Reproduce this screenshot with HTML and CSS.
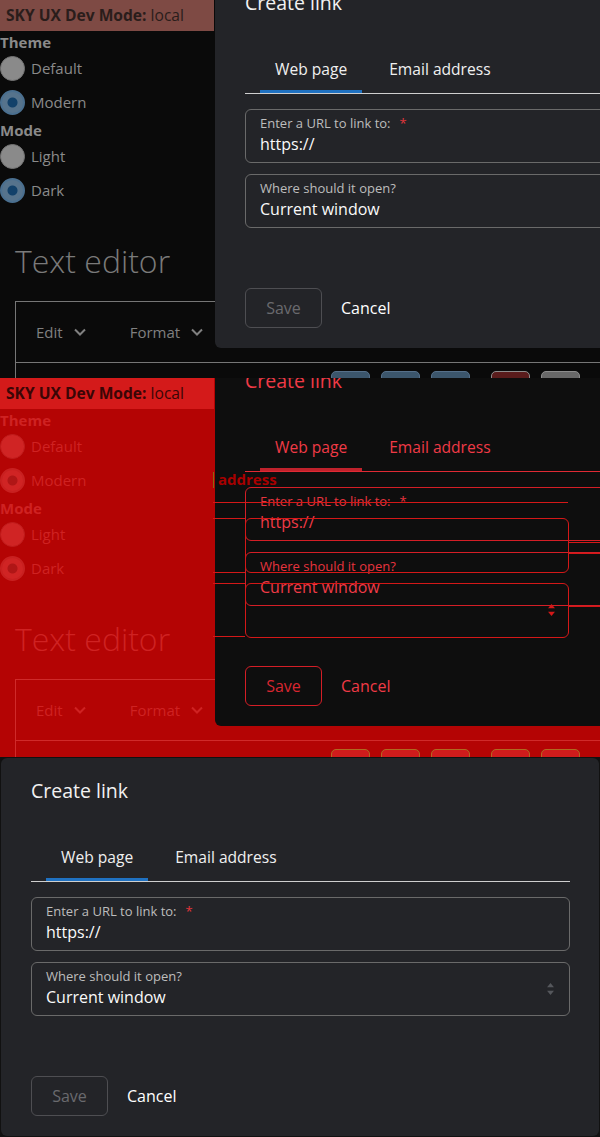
FILE: index.html
```html
<!DOCTYPE html>
<html lang="en">
<head>
<meta charset="utf-8">
<title>Create link – visual diff</title>
<link rel="stylesheet" href="styles.css">
</head>
<body>
<div class="shot">

  <!-- ACTUAL -->
  <section class="panel panel-actual">
    <div class="page">
      <div class="devbar"><b>SKY UX Dev Mode:</b> local</div>
      <div class="group-title">Theme</div>
      <div class="radio"><span class="radio-dot"></span>Default</div>
      <div class="radio on"><span class="radio-dot"></span>Modern</div>
      <div class="group-title">Mode</div>
      <div class="radio"><span class="radio-dot"></span>Light</div>
      <div class="radio on"><span class="radio-dot"></span>Dark</div>
      <h1 class="page-title">Text editor</h1>
      <div class="editor">
        <div class="menubar">
          <span class="menu">Edit <svg class="chev" viewBox="0 0 12 8"><polyline points="1,1.5 6,6.5 11,1.5"/></svg></span>
          <span class="menu">Format <svg class="chev" viewBox="0 0 12 8"><polyline points="1,1.5 6,6.5 11,1.5"/></svg></span>
        </div>
        <div class="toolbar">
          <span class="tb tb-blue"></span><span class="tb tb-blue"></span><span class="tb tb-blue"></span>
          <span class="tb tb-red"></span><span class="tb tb-gray"></span>
        </div>
      </div>
    </div>
    <div class="modal modal-offset">
      <h2 class="modal-title">Create link</h2>
      <div class="tabs"><span class="tab tab-active">Web page</span><span class="tab">Email address</span></div>
      <div class="field"><div class="field-label">Enter a URL to link to:<span class="req">*</span></div><div class="field-value">https://</div></div>
      <div class="field"><div class="field-label">Where should it open?</div><div class="field-value">Current window</div></div>
      <div class="actions"><span class="btn-save">Save</span><span class="btn-cancel">Cancel</span></div>
    </div>
  </section>

  <!-- DIFF -->
  <section class="panel panel-diff">
    <div class="page">
      <div class="devbar"><b>SKY UX Dev Mode:</b> local</div>
      <div class="group-title">Theme</div>
      <div class="radio"><span class="radio-dot"></span>Default</div>
      <div class="radio on"><span class="radio-dot"></span>Modern</div>
      <div class="group-title">Mode</div>
      <div class="radio"><span class="radio-dot"></span>Light</div>
      <div class="radio on"><span class="radio-dot"></span>Dark</div>
      <h1 class="page-title">Text editor</h1>
      <div class="editor">
        <div class="menubar">
          <span class="menu">Edit <svg class="chev" viewBox="0 0 12 8"><polyline points="1,1.5 6,6.5 11,1.5"/></svg></span>
          <span class="menu">Format <svg class="chev" viewBox="0 0 12 8"><polyline points="1,1.5 6,6.5 11,1.5"/></svg></span>
        </div>
        <div class="toolbar">
          <span class="tb tb-blue"></span><span class="tb tb-blue"></span><span class="tb tb-blue"></span>
          <span class="tb tb-red"></span><span class="tb tb-gray"></span>
        </div>
      </div>
    </div>
    <div class="modal modal-offset">
      <h2 class="modal-title">Create link</h2>
      <div class="tabs"><span class="tab tab-active">Web page</span><span class="tab">Email address</span></div>
      <div class="field"><div class="field-label">Enter a URL to link to:<span class="req">*</span></div><div class="field-value">https://</div></div>
      <div class="field"><div class="field-label">Where should it open?</div><div class="field-value">Current window</div></div>
      <div class="actions"><span class="btn-save">Save</span><span class="btn-cancel">Cancel</span></div>
    </div>
    <!-- diff marks -->
    <span class="mark-text">address</span>
    <span class="mark-v"></span>
    <span class="mark-h mh1"></span>
    <span class="mark-h mh2"></span>
    <span class="mark-h mh3"></span>
    <span class="mark-h mh4"></span>
    <span class="mark-h mh5"></span>
    <span class="mark-h mh6"></span>
    <span class="mark-h mh7"></span>
    <span class="mark-h mh8"></span>
    <span class="mark-box mb1"></span>
    <span class="mark-box mb2"></span>
    <svg class="mark-arrows" viewBox="0 0 8 14"><polygon points="4,0 8,5 0,5"/><polygon points="0,9 8,9 4,14"/></svg>
  </section>

  <!-- EXPECTED -->
  <section class="panel panel-expected">
    <div class="modal modal-full">
      <h2 class="modal-title">Create link</h2>
      <div class="tabs"><span class="tab tab-active">Web page</span><span class="tab">Email address</span></div>
      <div class="field"><div class="field-label">Enter a URL to link to:<span class="req">*</span></div><div class="field-value">https://</div></div>
      <div class="field"><div class="field-label">Where should it open?</div><div class="field-value">Current window</div>
        <svg class="select-arrows" viewBox="0 0 8 14"><polygon points="4,0 8,5 0,5"/><polygon points="0,9 8,9 4,14"/></svg>
      </div>
      <div class="actions"><span class="btn-save">Save</span><span class="btn-cancel">Cancel</span></div>
    </div>
  </section>

</div>
</body>
</html>
```

FILE: styles.css
```css
* { box-sizing: border-box; }

body {
  margin: 0;
  background: #0a0a0a;
  font-family: "Open Sans", "Noto Sans", sans-serif;
}

.shot { width: 600px; }

.panel {
  position: relative;
  overflow: hidden;
  width: 600px;
}
.panel-actual { height: 378px; background: #0a0a0a; }
.panel-diff { height: 379px; background: #b40404; }
.panel-expected { height: 380px; background: #111111; }

/* ---------- page behind the modal ---------- */
.page { width: 600px; }

.devbar {
  width: 214px;
  height: 31px;
  padding-left: 6px;
  background: #7e4a44;
  color: #2a1d1b;
  font-size: 15.6px;
  line-height: 31px;
  white-space: nowrap;
}
.devbar b { font-weight: 700; }

.group-title {
  height: 20px;
  line-height: 22px;
  font-size: 15px;
  font-weight: 700;
  color: #8a8a8a;
}

.radio {
  display: flex;
  align-items: center;
  gap: 6px;
  height: 34px;
  font-size: 15px;
  color: #8a8a8a;
}
.radio-dot {
  width: 25px;
  height: 25px;
  border-radius: 50%;
  background: #8a8a8a;
  border: 1px solid #747474;
}
.radio.on .radio-dot {
  background: radial-gradient(circle, #12416a 0 4.5px, #56738c 5.5px);
  border: 2px solid #4a6f8f;
}

.page-title {
  margin: 34px 0 0 15px;
  font-size: 32px;
  font-weight: 300;
  line-height: 40px;
  color: #7a7a7a;
}

.editor {
  margin: 20px 0 0 15px;
  width: 600px;
  border: 1px solid #767676;
}
.menubar {
  display: flex;
  align-items: center;
  height: 61px;
  padding-left: 20px;
  border-bottom: 1px solid #767676;
}
.menu {
  display: flex;
  align-items: center;
  gap: 11px;
  margin-right: 44px;
  font-size: 15px;
  color: #808080;
}
.chev { width: 12px; height: 8px; fill: none; stroke: #808080; stroke-width: 2; }

.toolbar {
  display: flex;
  gap: 11px;
  padding: 8px 0 0 315px;
}
.tb {
  width: 39px;
  height: 30px;
  border-radius: 5px;
  border: 1px solid;
}
.tb-blue { background: #3c566c; border-color: #56708a; }
.tb-red { background: #5a1c1c; border-color: #8c8c8c; margin-left: 10px; }
.tb-gray { background: #686868; border-color: #8c8c8c; }

/* ---------- modal ---------- */
.modal {
  position: absolute;
  width: 598px;
  height: 378px;
  padding: 0 29px 0 30px;
  background: #232428;
  border-radius: 6px;
  color: #f2f2f2;
}
.modal-offset { left: 215px; top: -30px; }
.modal-full { left: 1px; top: 1px; }

.modal-title {
  margin: 20px 0 0;
  font-size: 19.5px;
  font-weight: 400;
  line-height: 26px;
}

.tabs {
  display: flex;
  gap: 12px;
  margin-top: 29px;
  padding-left: 15px;
  border-bottom: 1px solid #cfcfcf;
}
.tab {
  display: flex;
  align-items: center;
  height: 48px;
  padding: 0 15px;
  font-size: 15.6px;
  color: #f0f0f0;
}
.tab-active { box-shadow: inset 0 -3px #1f71c1; }

.field {
  position: relative;
  height: 54px;
  margin-top: 15px;
  padding: 5px 14px 0;
  border: 1px solid #6a6a6a;
  border-radius: 6px;
}
.field + .field { margin-top: 11px; }
.field-label {
  font-size: 13px;
  line-height: 16px;
  color: #bdbdbd;
}
.req { margin-left: 9px; color: #e2363c; }
.field-value {
  margin-top: 2px;
  font-size: 16px;
  line-height: 22px;
  color: #fafafa;
}
.select-arrows {
  position: absolute;
  right: 15px;
  top: 20px;
  width: 7px;
  height: 12px;
  fill: #55575c;
}

.actions {
  display: flex;
  align-items: center;
  margin-top: 60px;
}
.btn-save {
  display: flex;
  align-items: center;
  justify-content: center;
  width: 77px;
  height: 40px;
  border: 1px solid #4e4e52;
  border-radius: 6px;
  font-size: 16px;
  color: #6a6a6e;
}
.btn-cancel {
  margin-left: 19px;
  font-size: 16px;
  font-weight: 500;
  color: #ffffff;
}

/* ---------- diff panel colouring ---------- */
.panel-diff .devbar { background: #d41a1a; color: #3a0606; }
.panel-diff .group-title,
.panel-diff .radio,
.panel-diff .page-title,
.panel-diff .menu { color: #cf2222; }
.panel-diff .chev { stroke: #cf2222; }
.panel-diff .radio-dot { background: #d02424; border-color: #c01c1c; }
.panel-diff .radio.on .radio-dot { background: radial-gradient(circle, #b01616 0 4.5px, #d02424 5.5px); border-color: #c82020; }
.panel-diff .editor,
.panel-diff .menubar { border-color: #d02a2a; }
.panel-diff .tb { background: #d01c1c; border-color: #b06a20; }
.panel-diff .modal { background: #0e0e0e; color: #f03a46; }
.panel-diff .tabs { border-color: #e02a34; }
.panel-diff .tab { color: #f03a46; }
.panel-diff .tab-active { box-shadow: inset 0 -3px #c0222c; }
.panel-diff .field { border-color: #d41e26; }
.panel-diff .field-label,
.panel-diff .req { color: #e8343e; }
.panel-diff .field-value { color: #f03a46; }
.panel-diff .btn-save { border-color: #d41e26; color: #d82630; }
.panel-diff .btn-cancel { color: #f03a46; }

.mark-text {
  position: absolute;
  left: 218px;
  top: 91px;
  font-size: 15px;
  font-weight: 700;
  line-height: 20px;
  color: #a80000;
}
.mark-v {
  position: absolute;
  left: 213px;
  top: 94px;
  width: 1px;
  height: 16px;
  background: #8a6a10;
}
.mark-h {
  position: absolute;
  height: 1px;
  background: #d41818;
}
.mh1 { left: 213px; width: 355px; top: 124px; }
.mh2 { left: 213px; width: 32px; top: 140px; }
.mh3 { left: 213px; width: 32px; top: 194px; }
.mh4 { left: 568px; width: 32px; top: 164px; }
.mh5 { left: 568px; width: 32px; top: 175px; }
.mh6 { left: 213px; width: 32px; top: 205px; }
.mh7 { left: 213px; width: 32px; top: 258px; }
.mh8 { left: 568px; width: 32px; top: 228px; }
.mark-box {
  position: absolute;
  left: 245px;
  width: 324px;
  height: 55px;
  border: 1px solid #d41818;
  border-radius: 6px;
}
.mb1 { top: 140px; }
.mb2 { top: 205px; }
.mark-arrows {
  position: absolute;
  left: 548px;
  top: 226px;
  width: 7px;
  height: 12px;
  fill: #d41818;
}
```
